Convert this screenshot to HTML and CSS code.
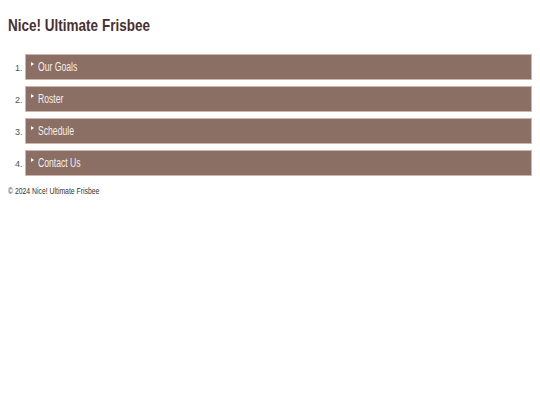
FILE: index.html
```html
<!DOCTYPE html>
<html>
<head>
<meta charset="utf-8">
<link rel="stylesheet" href="styles.css">
</head>
<body>
<h1 class="title"><span class="narrow">Nice! Ultimate Frisbee</span></h1>
<ol class="sections">
  <li class="item"><div class="bar"><span class="tri"></span><span class="label">Our Goals</span></div></li>
  <li class="item"><div class="bar"><span class="tri"></span><span class="label">Roster</span></div></li>
  <li class="item"><div class="bar"><span class="tri"></span><span class="label">Schedule</span></div></li>
  <li class="item"><div class="bar"><span class="tri"></span><span class="label">Contact Us</span></div></li>
</ol>
<footer class="foot"><span class="narrow-foot">© 2024 Nice! Ultimate Frisbee</span></footer>
</body>
</html>
```
FILE: styles.css
```css
body {
  margin: 8px;
  font-family: "Liberation Sans", Arial, sans-serif;
  background: #fff;
}
.title {
  font-size: 17px;
  font-weight: bold;
  color: #4a3030;
  margin: 6px 0 0 0;
  line-height: 24px;
}
.narrow {
  display: inline-block;
  transform: scaleX(0.795);
  transform-origin: left center;
  white-space: nowrap;
}
.sections {
  margin: 16px 0 0 0;
  padding-left: 17px;
  font-size: 9px;
  color: #555;
}
.item {
  margin-bottom: 6px;
}
.item::marker {
  font-size: 9px;
}
.bar {
  background: #8b6e64;
  border: 1px solid #cdb6ae;
  height: 24px;
  line-height: 24px;
  color: #f5eeea;
  font-size: 12.5px;
  padding-left: 5px;
  white-space: nowrap;
}
.tri {
  display: inline-block;
  width: 0;
  height: 0;
  border-top: 2.5px solid transparent;
  border-bottom: 2.5px solid transparent;
  border-left: 3px solid #fff;
  margin-right: 4px;
  vertical-align: 5px;
}
.label {
  display: inline-block;
  transform: scaleX(0.69);
  transform-origin: left center;
}
.foot {
  font-size: 9px;
  color: #333;
  margin-top: 10px;
}
.narrow-foot {
  display: inline-block;
  transform: scaleX(0.76);
  transform-origin: left center;
  white-space: nowrap;
}
```
